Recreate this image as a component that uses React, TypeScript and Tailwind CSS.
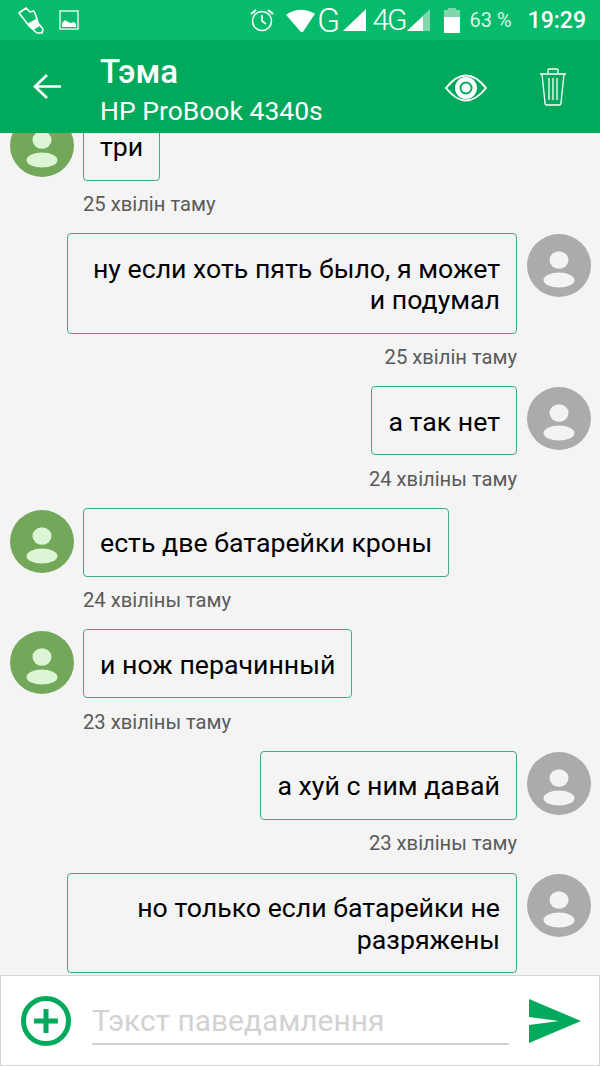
import React from "react";

function Avatar({ color, fg }: { color: string; fg: string }) {
  return (
    <svg width="64" height="63" viewBox="0 0 64 63" className="shrink-0">
      <ellipse cx="32" cy="31.5" rx="32" ry="31.5" fill={color} />
      <ellipse cx="32" cy="26" rx="9.5" ry="8.8" fill={fg} />
      <ellipse cx="32" cy="46" rx="15.5" ry="7.5" fill={fg} />
    </svg>
  );
}

function Bubble({ text, right }: { text: string; right?: boolean }) {
  return (
    <div
      className={
        "max-w-[450px] rounded-[4px] border border-[#3fae86] px-4 pb-[16px] pt-[19.5px] text-[26.7px] leading-[31.5px] text-black " +
        (right ? "text-right" : "")
      }
    >
      {text}
    </div>
  );
}

function Time({ text, right }: { text: string; right?: boolean }) {
  return (
    <div
      className={
        "mt-[11.5px] h-[41.1px] text-[20.2px] leading-[24px] text-[#5a5a5a] " +
        (right ? "pr-[83px] text-right" : "pl-[83px] text-left")
      }
    >
      {text}
    </div>
  );
}

function Left({ text, time }: { text: string; time: string }) {
  return (
    <div>
      <div className="flex items-start pl-[10px]">
        <div className="pt-[2px]">
          <Avatar color="#73a85a" fg="#dcf5d4" />
        </div>
        <div className="ml-[9px]">
          <Bubble text={text} />
        </div>
      </div>
      <Time text={time} />
    </div>
  );
}

function Right({ text, time, wide }: { text: string; time?: string; wide?: boolean }) {
  return (
    <div>
      <div className="flex items-start justify-end pr-[9px]">
        <div className={wide ? "w-[450px]" : ""}>
          <Bubble text={text} right />
        </div>
        <div className="ml-[10px] pt-[1px]">
          <Avatar color="#ababab" fg="#f3f3f3" />
        </div>
      </div>
      {time && <Time text={time} right />}
    </div>
  );
}

function StatusBar() {
  return (
    <div className="flex h-[40px] shrink-0 items-center bg-[#06bb6b] pl-[16px] pr-[14px] text-white">
      <svg width="28" height="28" viewBox="0 0 28 28" fill="none" stroke="#fff" strokeWidth="1.6" strokeLinejoin="round">
        <path d="M3 7 L10 2 L14 6 L18 5 L20 10 L22 17 L27 23 L26 27 L21 27 L14 21 Z" />
        <path d="M11 18 L20 13 L24 20 L17 24 Z" fill="#fff" stroke="none" />
      </svg>
      <svg width="20" height="20" viewBox="0 0 20 20" fill="none" className="ml-[15px]">
        <rect x="1" y="1" width="18" height="18" stroke="#fff" strokeWidth="1.3" />
        <path d="M3 17 L3 13 L6 10 L9 12 L12 13 L15 12 L17 14 L17 17 Z" fill="#fff" />
      </svg>
      <div className="flex-1" />
      <svg width="26" height="26" viewBox="0 0 26 26" fill="none" stroke="#fff" strokeWidth="1.6">
        <circle cx="13" cy="14" r="9.5" />
        <path d="M13 8 V14 L17 17" />
        <path d="M2 7 L7 3 M24 7 L19 3" strokeWidth="2.2" />
      </svg>
      <svg width="29" height="23" viewBox="0 0 33 24" preserveAspectRatio="none" className="ml-[11px]">
        <path d="M0 6 Q16 -4 33 5 L20 23 Q18 26 15 22 Z" fill="#fff" />
      </svg>
      <span className="ml-[2px] text-[34px] font-light leading-none">G</span>
      <svg width="25" height="23" viewBox="0 0 25 23" className="ml-[3px]">
        <path d="M0 22 L23 0 V22 Z" fill="#fff" />
      </svg>
      <span className="ml-[4px] text-[30px] font-light leading-none tracking-[-2px]">4G</span>
      <svg width="24" height="23" viewBox="0 0 24 23" className="ml-[1px]">
        <path d="M0 22 L23 0 V22 Z" fill="#7fd7ae" />
        <path d="M0 22 L16 7 V22 Z" fill="#fff" />
      </svg>
      <svg width="17" height="25" viewBox="0 0 17 25" className="ml-[13px]">
        <path d="M4 0 H12 V2 H16 V10 H0 V2 H4 Z" fill="#7fd7ae" />
        <rect x="0" y="9" width="16" height="16" fill="#fff" />
      </svg>
      <span className="ml-[9px] text-[20px] leading-none text-[#d8f5e6]">63 %</span>
      <span className="ml-[16px] text-[23px] font-medium leading-none">19:29</span>
    </div>
  );
}

function Header() {
  return (
    <div className="flex h-[93px] shrink-0 items-start bg-[#00a95c] text-white">
      <svg width="28" height="27" viewBox="0 0 28 27" fill="none" stroke="#fff" strokeWidth="2.6" className="ml-[33px] mt-[33px] shrink-0">
        <path d="M28 13.5 H3 M14 2 L2 13.5 L14 25" />
      </svg>
      <div className="ml-[39px] mt-[13px]">
        <div className="text-[33px] font-medium leading-[38px]">Тэма</div>
        <div className="mt-[4px] text-[26.5px] leading-[32px]">HP ProBook 4340s</div>
      </div>
      <div className="flex-1" />
      <svg width="42" height="28" viewBox="0 0 42 28" fill="none" className="mt-[34px] shrink-0">
        <path d="M1 14 Q21 -11 41 14 Q21 39 1 14 Z" stroke="#fff" strokeWidth="2" />
        <circle cx="21" cy="14" r="11" fill="#fff" />
        <circle cx="21" cy="14" r="6.5" fill="#00a95c" />
        <circle cx="21" cy="14" r="4.5" fill="#fff" />
      </svg>
      <svg width="28" height="38" viewBox="0 0 28 38" fill="none" stroke="#fff" strokeWidth="1.3" className="ml-[52px] mr-[33px] mt-[28px] shrink-0">
        <path d="M1 6 H27 M9 5 V2 Q9 1 10 1 H18 Q19 1 19 2 V5" />
        <path d="M3 6 L6 35 Q6 37 8 37 H20 Q22 37 22 35 L25 6" />
        <path d="M10 10 V32 M14 10 V32 M18 10 V32" />
      </svg>
    </div>
  );
}

function InputBar() {
  return (
    <div className="flex h-[91px] shrink-0 items-start border border-[#d5d5d5] bg-white">
      <svg width="50" height="50" viewBox="0 0 50 50" fill="none" className="ml-[20px] mt-[20px] shrink-0">
        <ellipse cx="25" cy="25" rx="22.5" ry="22.5" stroke="#00a95c" strokeWidth="5" />
        <path d="M25 13 V37 M13 25 H37" stroke="#00a95c" strokeWidth="5" />
      </svg>
      <div className="ml-[21px] mt-[27px] h-[42px] w-[417px] shrink-0 border-b-2 border-[#d2d2d2] text-[29.9px] leading-[36px] text-[#d2d2d2]">
        Тэкст паведамлення
      </div>
      <svg width="52" height="44" viewBox="0 0 52 44" className="ml-[20px] mt-[23px] shrink-0">
        <path d="M0 0 L52 22 L0 44 V26 L30 22 L0 18 Z" fill="#00a95c" />
      </svg>
    </div>
  );
}

export default function App() {
  return (
    <div className="flex h-[1066px] w-[600px] flex-col overflow-hidden bg-[#f4f4f4] font-['Roboto',sans-serif]">
      <StatusBar />
      <Header />
      <div className="min-h-0 flex-1 overflow-hidden">
        <div className="mt-[-21.5px]">
          <Left text="три" time="25 хвілін таму" />
          <Right wide text="ну если хоть пять было, я может и подумал" time="25 хвілін таму" />
          <Right text="а так нет" time="24 хвіліны таму" />
          <Left text="есть две батарейки кроны" time="24 хвіліны таму" />
          <Left text="и нож перачинный" time="23 хвіліны таму" />
          <Right text="а хуй с ним давай" time="23 хвіліны таму" />
          <Right wide text="но только если батарейки не разряжены" />
        </div>
      </div>
      <InputBar />
    </div>
  );
}
